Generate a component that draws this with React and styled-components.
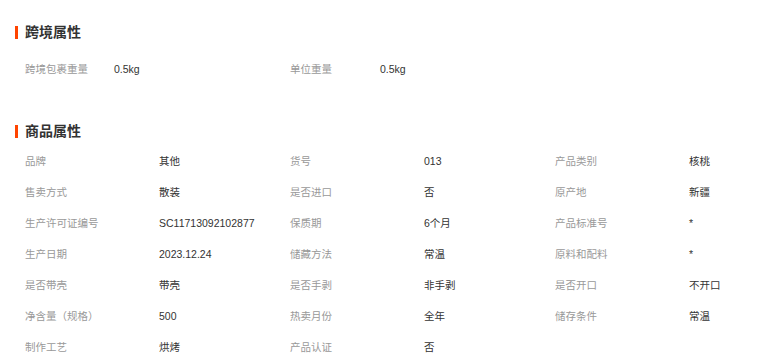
import React from "react";
import styled, { createGlobalStyle } from "styled-components";

const Global = createGlobalStyle`
  html, body {
    margin: 0;
    padding: 0;
    background: #fff;
  }
  body {
    font-family: "Liberation Sans", "Noto Sans CJK SC", sans-serif;
    color: #333;
  }
`;

const Page = styled.div`
  padding: 22px 0 0 15px;
  width: 771px;
  box-sizing: border-box;
  overflow: hidden;
`;

const Section = styled.section`
  margin-bottom: ${props => props.gap || 0}px;
`;

const Title = styled.h3`
  position: relative;
  margin: 0 0 ${props => props.space}px 0;
  padding-left: 10px;
  height: 20px;
  line-height: 20px;
  font-size: 14px;
  font-weight: bold;
  color: #333;
  font-family: "Liberation Sans", "Noto Sans CJK SC", sans-serif;

  &::before {
    content: "";
    position: absolute;
    left: 0;
    top: 4px;
    width: 3px;
    height: 13px;
    background: #ff4400;
  }
`;

const Table = styled.div`
  display: grid;
  grid-template-columns: ${props => props.cols};
  padding-left: 10px;
`;

const Cell = styled.div`
  height: 31px;
  line-height: 31px;
  font-size: 10.5px;
  white-space: nowrap;
  color: ${props => (props.label ? "#999" : "#333")};
`;

const crossAttrs = [
  ["跨境包裹重量", "0.5kg"],
  ["单位重量", "0.5kg"],
];

const goodsAttrs = [
  ["品牌", "其他"],
  ["货号", "013"],
  ["产品类别", "核桃"],
  ["售卖方式", "散装"],
  ["是否进口", "否"],
  ["原产地", "新疆"],
  ["生产许可证编号", "SC11713092102877"],
  ["保质期", "6个月"],
  ["产品标准号", "*"],
  ["生产日期", "2023.12.24"],
  ["储藏方法", "常温"],
  ["原料和配料", "*"],
  ["是否带壳", "带壳"],
  ["是否手剥", "非手剥"],
  ["是否开口", "不开口"],
  ["净含量（规格）", "500"],
  ["热卖月份", "全年"],
  ["储存条件", "常温"],
  ["制作工艺", "烘烤"],
  ["产品认证", "否"],
];

const renderPairs = list =>
  list.map(([k, v]) => (
    <React.Fragment key={k}>
      <Cell label>{k}</Cell>
      <Cell>{v}</Cell>
    </React.Fragment>
  ));

export default function App() {
  return (
    <Page>
      <Global />
      <Section gap={36}>
        <Title space={12}>跨境属性</Title>
        <Table cols="89px 176px 90px 1fr">{renderPairs(crossAttrs)}</Table>
      </Section>
      <Section>
        <Title space={5}>商品属性</Title>
        <Table cols="134px 131px 134px 131px 134px 131px">
          {renderPairs(goodsAttrs)}
        </Table>
      </Section>
    </Page>
  );
}
